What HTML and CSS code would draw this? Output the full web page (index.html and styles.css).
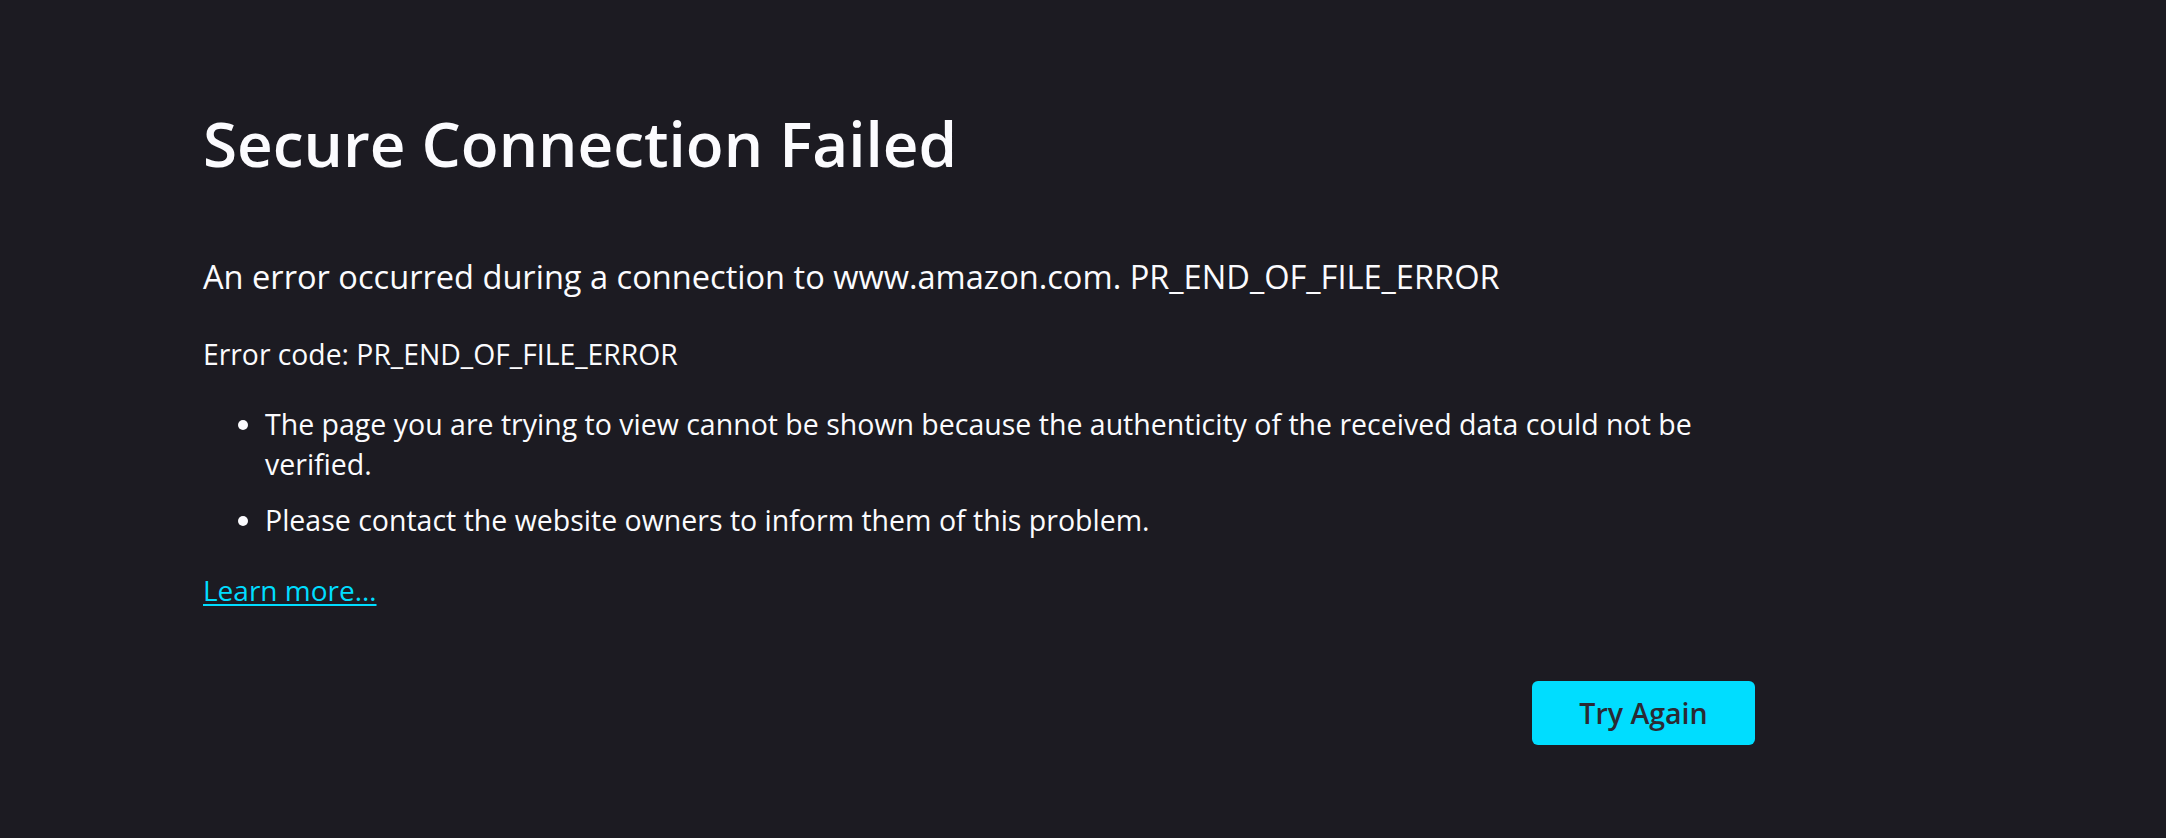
FILE: index.html
```html
<!DOCTYPE html>
<html lang="en">
<head>
<meta charset="utf-8">
<title>Problem loading page</title>
<link rel="stylesheet" href="styles.css">
</head>
<body>
<div class="container">
  <h1 class="title">Secure Connection Failed</h1>
  <p class="short-desc">An error occurred during a connection to www.amazon.com. PR_END_OF_FILE_ERROR</p>
  <p class="error-code">Error code: PR_END_OF_FILE_ERROR</p>
  <ul class="details">
    <li>The page you are trying to view cannot be shown because the authenticity of the received data could not be verified.</li>
    <li>Please contact the website owners to inform them of this problem.</li>
  </ul>
  <a class="learn-more" href="#">Learn more…</a>
  <div class="actions">
    <button class="try-again" type="button">Try Again</button>
  </div>
</div>
</body>
</html>
```

FILE: styles.css
```css
html, body {
  margin: 0;
  padding: 0;
  background: #1c1b22;
  color: #fbfbfe;
  font-family: "Open Sans", "Noto Sans", sans-serif;
}

.container {
  margin-left: 203px;
  width: 1552px;
  padding-top: 103px;
  display: flex;
  flex-direction: column;
  align-items: flex-start;
}

.title {
  margin: 0;
  font-size: 62px;
  line-height: 80px;
  font-weight: 600;
}

.short-desc {
  margin: 72px 0 0;
  font-size: 32.6px;
  line-height: 44px;
}

.error-code {
  margin: 35px 0 0;
  font-size: 28.3px;
  line-height: 40px;
}

.details {
  margin: 30px 0 0;
  padding-left: 62px;
  font-size: 28.5px;
  line-height: 40px;
}

.details li + li {
  margin-top: 16px;
}

.learn-more {
  margin-top: 30px;
  font-size: 28px;
  line-height: 40px;
  color: #00ddff;
  text-decoration: underline;
  text-decoration-thickness: 2px;
  text-underline-offset: 3px;
}

.actions {
  align-self: stretch;
  display: flex;
  justify-content: flex-end;
  margin-top: 71px;
}

.try-again {
  width: 223px;
  height: 64px;
  border: none;
  border-radius: 6px;
  background: #00ddff;
  color: #2b2a33;
  font-family: "Open Sans", "Noto Sans", sans-serif;
  font-size: 28.5px;
  font-weight: 600;
  padding: 0;
}
```
